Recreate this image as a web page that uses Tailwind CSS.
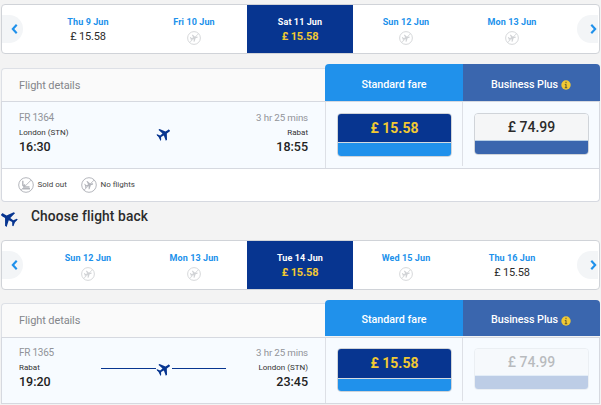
<!DOCTYPE html>
<html lang="en">
<head>
  <meta charset="UTF-8">
  <meta name="viewport" content="width=device-width, initial-scale=1.0">
  <title>Choose your flights</title>
  <script src="https://cdn.jsdelivr.net/npm/@tailwindcss/browser@4"></script>
</head>
<body class="h-[405px] overflow-hidden bg-[#f3f3f3] font-['Roboto',sans-serif] text-[#2b2b2b]">
  <!-- Icons -->
  <svg class="hidden">
    <symbol id="plane" viewBox="0 0 24 24">
      <path fill="currentColor" d="M23.500 16v-2.500L14 7.500V2.500C14 1 13.200 0 12 0s-2 1-2 2.500v5l-9.500 6V16l9.500-2.300.5 5.300-4.500 3v2l5.200-1.300h1.600L18 24v-2l-4.500-3 .5-5.300z"/>
    </symbol>
    <symbol id="no-flights" viewBox="0 0 16 16">
      <circle cx="8" cy="8" r="7.300" fill="none" stroke="currentColor"/>
      <path d="M3 13.200 13.200 3" stroke="currentColor" stroke-width=".9"/>
      <use href="#plane" x="3.500" y="3.500" width="9" height="9" transform="rotate(75 8 8)"/>
    </symbol>
    <symbol id="sold-out" viewBox="0 0 16 16">
      <circle cx="8" cy="8" r="7.300" fill="none" stroke="currentColor"/>
      <path d="M3 13.200 13.200 3" stroke="currentColor" stroke-width=".9"/>
      <path d="M4.800 3.800v4.500l1.700 1.700h5M6.500 7.200v2.500M4.500 11.700h7.500" fill="none" stroke="currentColor" stroke-width="1.400"/>
    </symbol>
  </svg>

  <!-- Outbound -->
  <section>
    <div id="outDates" class="mt-1 ml-px flex h-[50px] w-[599px] overflow-hidden rounded border border-[#d0d3d8] bg-white"></div>
    <div id="outFlight" class="mt-[10px] ml-px w-[599px]"></div>
    <div class="ml-px flex h-[33px] w-[599px] items-center rounded-b border border-t-0 border-[#d6d9e0] bg-white pl-[15.5px] text-[8px] text-[#444]">
      <svg class="size-4 text-[#b4b6bc]"><use href="#sold-out"/></svg>
      <span class="ml-1 w-[43px]">Sold out</span>
      <svg class="size-4 text-[#b4b6bc]"><use href="#no-flights"/></svg>
      <span class="ml-1">No flights</span>
    </div>
  </section>

  <!-- Inbound -->
  <h2 class="flex h-[38px] items-center pb-[9px] text-[13.75px] font-medium tracking-[0.12px]">
    <svg class="mt-[3px] mr-[14px] size-[17px] -rotate-[58deg] text-[#073590]"><use href="#plane"/></svg>
    Choose flight back
  </h2>
  <section>
    <div id="backDates" class="ml-px flex h-[50px] w-[599px] overflow-hidden rounded border border-[#d0d3d8] bg-white"></div>
    <div id="backFlight" class="mt-[10px] ml-px w-[599px]"></div>
  </section>

  <script>
    const arrow = (d, side, pad) => `
      <button class="mt-2.5 flex h-7 w-[33px] shrink-0 ${side}">
        <span class="flex h-7 w-[21px] items-center bg-[#f3f5f7] ${pad}">
          <svg class="h-[10px] w-[7px] text-[#2091eb]" viewBox="0 0 6 9"><path d="${d}" fill="none" stroke="currentColor" stroke-width="1.900"/></svg>
        </span>
      </button>`;

    function renderDates(id, days) {
      const cells = days.map(day => {
        const box = day.selected ? 'bg-[#073590] text-white' : 'text-[#2091eb]';
        const price = day.selected ? 'font-bold text-[#f1c933]' : 'text-[#2b2b2b]';
        return `
          <div class="flex w-[106px] shrink-0 flex-col items-center pt-2.5 ${box}">
            <span class="text-[9px] leading-[14px] font-bold tracking-[0.1px]">${day.date}</span>
            ${day.price
              ? `<span class="pt-px text-[11px] leading-[14px] tracking-[-0.15px] ${price}">${day.price}</span>`
              : `<svg class="mt-[2px] size-[14px] text-[#d0d2d5]"><use href="#no-flights"/></svg>`}
          </div>`;
      }).join('');
      document.getElementById(id).innerHTML =
        arrow('M5 .7 1.500 4.500 5 8.300', 'justify-start', 'rounded-r-full justify-end pr-[5px]') + cells +
        arrow('M1 .7 4.500 4.500 1 8.300', 'justify-end', 'rounded-l-full justify-end pr-px');
    }

    function renderFlight(id, f) {
      const line = f.selected ? 'bg-[#073590]' : 'bg-transparent';
      const plus = f.selected ? 'opacity-30' : '';
      document.getElementById(id).innerHTML = `
        <div class="flex h-[37px] items-end text-[11px]">
          <div class="flex ${f.detailsHeight} w-[324px] items-center rounded-tl border-t border-l border-[#dde0e6] bg-[#fafafa] pt-0.5 pl-[17px] tracking-[-0.1px] text-[#84868a]">Flight details</div>
          <div class="flex ${f.headHeight} w-[138px] items-center justify-center self-start rounded-tl bg-[#2091eb] pt-[5px] text-[10.75px] font-medium text-white">Standard fare</div>
          <div class="flex ${f.headHeight} w-[137px] items-center justify-center gap-[3px] self-start rounded-tr bg-[#3a66ae] pt-[5px] pr-px text-[10.75px] font-medium tracking-[-0.05px] text-white">
            Business Plus
            <svg class="size-[10px]" viewBox="0 0 10 10"><circle cx="5" cy="5" r="4.700" fill="#f1c933"/><path d="M5 1.800v1.500M5 4.200v3.500M3.800 4.500H5M3.800 7.700h2.400" stroke="#73662f" stroke-width="1.200"/></svg>
          </div>
        </div>
        <div class="flex ${f.rowHeight} border border-[#d6d9e0] bg-[#f7fbff]">
          <div class="grid w-[323px] grid-cols-[82px_125px_1fr] px-[17px] ${f.textTop} text-[8px] leading-[14px] text-[#333]">
            <div class="whitespace-nowrap">
              <p class="text-[10px] tracking-[-0.25px] text-[#919399]">${f.number}</p>
              <p class="pt-px">${f.from}</p>
              <p class="text-[12.5px] leading-[14px] font-medium text-[#222]">${f.departs}</p>
            </div>
            <div class="mt-[14px] flex h-[17px] items-center">
              <span class="h-px w-[55px] ${line}"></span>
              <svg class="mx-[1px] mt-px size-[14px] shrink-0 rotate-[56deg] text-[#073590]"><use href="#plane"/></svg>
              <span class="h-px flex-1 ${line}"></span>
            </div>
            <div class="text-right whitespace-nowrap">
              <p class="text-[9.75px] tracking-[-0.15px] text-[#919399]">${f.duration}</p>
              <p class="pt-px">${f.to}</p>
              <p class="text-[12.5px] leading-[14px] font-medium text-[#222]">${f.arrives}</p>
            </div>
          </div>
          <div class="w-[137px] border-l border-[#dde0e6] ${f.fareTop} pl-[11px]">
            <div class="flex h-[44px] w-[115px] flex-col overflow-hidden rounded border border-[#cfd3d8]">
              <div class="flex ${f.priceHeight} items-center justify-center border-b border-[#d5dbe0] bg-[#073590] text-[14px] font-bold text-[#f1c933]">${f.standard}</div>
              <div class="flex-1 bg-[#2091eb]"></div>
            </div>
          </div>
          <div class="mb-0.5 flex-1 border-l border-[#dde0e6] ${f.fareTop} pl-[11px]">
            <div class="flex h-[42px] w-[115px] flex-col overflow-hidden rounded border border-[#d0d4d9] ${plus}">
              <div class="flex h-[27px] items-center justify-center border-b border-[#b7cfe6] bg-[#f5f6f7] pt-px text-[14px] font-medium">${f.business}</div>
              <div class="flex-1 bg-[#3a66ae]"></div>
            </div>
          </div>
        </div>`;
    }

    renderDates('outDates', [
      { date: 'Thu 9 Jun', price: '£ 15.58' },
      { date: 'Fri 10 Jun' },
      { date: 'Sat 11 Jun', price: '£ 15.58', selected: true },
      { date: 'Sun 12 Jun' },
      { date: 'Mon 13 Jun' },
    ]);
    renderDates('backDates', [
      { date: 'Sun 12 Jun' },
      { date: 'Mon 13 Jun' },
      { date: 'Tue 14 Jun', price: '£ 15.58', selected: true },
      { date: 'Wed 15 Jun' },
      { date: 'Thu 16 Jun', price: '£ 15.58' },
    ]);

    renderFlight('outFlight', {
      number: 'FR 1364', from: 'London (STN)', to: 'Rabat', departs: '16:30', arrives: '18:55',
      duration: '3 hr 25 mins', standard: '£ 15.58', business: '£ 74.99',
      detailsHeight: 'h-[33px]', headHeight: 'h-[37px]', rowHeight: 'h-[68px]',
      textTop: 'pt-[9px]', fareTop: 'pt-[11px]', priceHeight: 'h-[29px]',
    });
    renderFlight('backFlight', {
      number: 'FR 1365', from: 'Rabat', to: 'London (STN)', departs: '19:20', arrives: '23:45',
      duration: '3 hr 25 mins', standard: '£ 15.58', business: '£ 74.99', selected: true,
      detailsHeight: 'h-[34px]', headHeight: 'h-[36px]', rowHeight: 'h-[67px]',
      textTop: 'pt-[8px]', fareTop: 'pt-[10px]', priceHeight: 'h-[30px]',
    });
  </script>
</body>
</html>
